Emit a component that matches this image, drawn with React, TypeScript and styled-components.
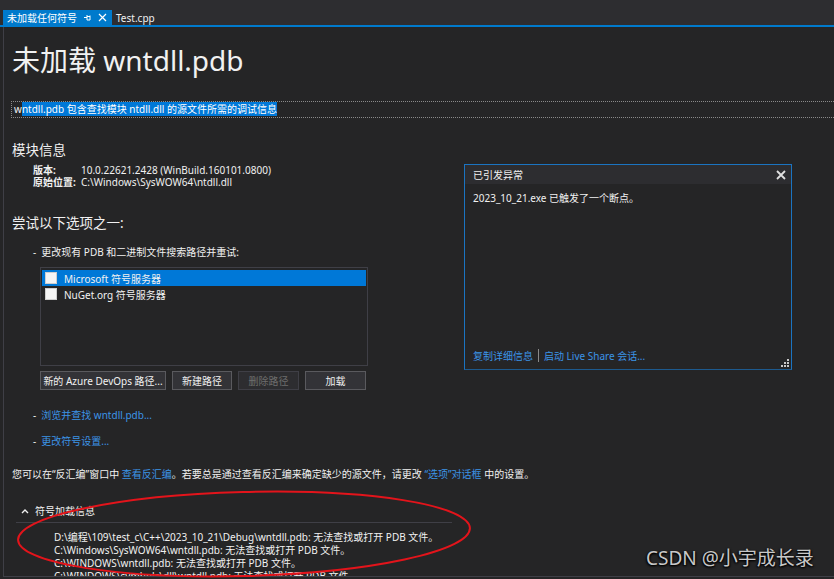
import styled, { createGlobalStyle } from "styled-components";

const GlobalStyle = createGlobalStyle`
    html, body {
        margin: 0;
        padding: 0;
        background: #252526;
    }
    body {
        font-family: "Segoe UI", "Noto Sans", "Noto Sans CJK SC", sans-serif;
        color: #f1f1f1;
    }
`;

const Window = styled.div`
    position: relative;
    width: 834px;
    height: 579px;
    overflow: hidden;
    background: #252526;
    display: flex;
    flex-direction: column;
`;

const TabBar = styled.div`
    height: 25px;
    background: #2d2d30;
    border-bottom: 2px solid #007acc;
    display: flex;
    align-items: flex-end;
    padding-left: 3px;
`;

const Tab = styled.div<{ $active?: boolean }>`
    height: 15px;
    display: flex;
    align-items: center;
    gap: 6px;
    padding: 0 5px 0 4px;
    font-size: 10px;
    background: ${(p) => (p.$active ? "#007acc" : "transparent")};
    color: ${(p) => (p.$active ? "#ffffff" : "#f1f1f1")};
`;

const TabIcon = styled.span`
    display: flex;
    align-items: center;
`;

const Content = styled.div`
    flex: 1;
    margin-left: 3px;
    margin-bottom: 2px;
    border-left: 1px solid #3f3f46;
    border-bottom: 1px solid #3f3f46;
    padding: 13px 0 0 8px;
    overflow: hidden;
`;

const Title = styled.h1`
    margin: 0;
    font-size: 28px;
    line-height: 40px;
    font-weight: 400;
    color: #f1f1f1;
`;

const Description = styled.div`
    margin: 21px 0 0 -1px;
    border: 1px dotted #8a8a8a;
    border-right: none;
    height: 15px;
    line-height: 15px;
    font-size: 10px;
    padding-left: 2px;
    white-space: nowrap;
`;

const Selected = styled.span`
    background: #0078d7;
    color: #ffffff;
`;

const Heading = styled.h2<{ $top: number }>`
    margin: ${(p) => p.$top}px 0 0 0;
    font-size: 13.5px;
    line-height: 20px;
    font-weight: 400;
    color: #f1f1f1;
`;

const InfoGrid = styled.div`
    margin: 4px 0 0 21px;
    display: grid;
    grid-template-columns: 48px auto;
    font-size: 10px;
    line-height: 12px;
`;

const InfoLabel = styled.span`
    font-weight: 700;
`;

const Option = styled.div<{ $top: number }>`
    margin: ${(p) => p.$top}px 0 0 21px;
    font-size: 10px;
    line-height: 14px;
    display: flex;
    gap: 5px;
`;

const Dash = styled.span`
    color: #f1f1f1;
`;

const Link = styled.span`
    color: #3c94e6;
`;

const Block = styled.div`
    margin: 8px 0 0 28px;
    width: 328px;
`;

const ListBox = styled.div`
    height: 93px;
    border: 1px solid #3f3f46;
    padding: 2px 1px;
    display: flex;
    flex-direction: column;
`;

const ListItem = styled.div<{ $selected?: boolean }>`
    height: 16px;
    display: flex;
    align-items: center;
    gap: 7px;
    padding-left: 3px;
    font-size: 10px;
    background: ${(p) => (p.$selected ? "#0078d7" : "transparent")};
`;

const Check = styled.span`
    width: 10px;
    height: 10px;
    background: #f5f5f5;
    border: 1px solid #cfcfcf;
`;

const ButtonRow = styled.div`
    margin-top: 5px;
    display: flex;
    gap: 6px;
`;

const Button = styled.div<{ $width: number; $disabled?: boolean }>`
    width: ${(p) => p.$width}px;
    height: 17px;
    box-sizing: content-box;
    border: 1px solid ${(p) => (p.$disabled ? "#3f3f46" : "#5a5a5e")};
    background: ${(p) => (p.$disabled ? "#2d2d30" : "#333337")};
    color: ${(p) => (p.$disabled ? "#6d6d6d" : "#f1f1f1")};
    font-size: 10px;
    display: flex;
    align-items: center;
    justify-content: center;
    white-space: nowrap;
`;

const Paragraph = styled.div`
    margin-top: 19px;
    font-size: 10px;
    line-height: 14px;
    white-space: nowrap;
`;

const Expander = styled.div`
    margin: 23px 0 0 4px;
    width: 431px;
    border-bottom: 1px solid #3f3f46;
    height: 18px;
    display: flex;
    align-items: flex-start;
    gap: 6px;
    padding-left: 5px;
    font-size: 10px;
    line-height: 14px;
`;

const Caret = styled.span`
    display: flex;
    align-items: center;
    height: 14px;
`;

const Log = styled.div`
    margin: 8px 0 0 42px;
    font-size: 10px;
    line-height: 13px;
    white-space: nowrap;
`;

/* floating exception helper */
const Popup = styled.div`
    position: absolute;
    left: 464px;
    top: 164px;
    width: 326px;
    height: 204px;
    border: 1px solid #1b74c1;
    border-bottom-color: #1d5a8e;
    background: #252526;
    display: flex;
    flex-direction: column;
`;

const PopupHeader = styled.div`
    height: 19px;
    background: #2d2d30;
    display: flex;
    align-items: center;
    justify-content: space-between;
    padding: 0 5px 0 8px;
    font-size: 10px;
`;

const PopupBody = styled.div`
    flex: 1;
    padding: 7px 8px 0 8px;
    font-size: 10px;
    line-height: 14px;
`;

const PopupFooter = styled.div`
    position: relative;
    height: 27px;
    display: flex;
    align-items: center;
    gap: 5px;
    padding-left: 8px;
    font-size: 10px;
`;

const Separator = styled.span`
    width: 1px;
    height: 13px;
    background: #8a8a8a;
`;

const Grip = styled.svg`
    position: absolute;
    right: 2px;
    bottom: 2px;
`;

const Annotation = styled.svg`
    position: absolute;
    left: 0;
    top: 0;
    pointer-events: none;
`;

const Watermark = styled.div`
    position: absolute;
    left: 646px;
    top: 545px;
    font-family: "Noto Sans", "Noto Sans CJK SC", sans-serif;
    font-size: 19px;
    line-height: 26px;
    color: #c8c8c8;
    text-shadow: 1px 1px 2px #000, -1px 1px 2px #000;
`;

const App = () => {
    return (
        <Window>
            <GlobalStyle />
            <TabBar>
                <Tab $active>
                    未加载任何符号
                    <TabIcon>
                        <svg width="9" height="9" viewBox="0 0 9 9">
                            <path d="M1 4.5h3M4 2v5h3V2.5M4 3.5h3" stroke="#fff" strokeWidth="1" fill="none" />
                        </svg>
                    </TabIcon>
                    <TabIcon>
                        <svg width="9" height="9" viewBox="0 0 9 9">
                            <path d="M1 1l7 7M8 1l-7 7" stroke="#fff" strokeWidth="1.2" />
                        </svg>
                    </TabIcon>
                </Tab>
                <Tab>Test.cpp</Tab>
            </TabBar>
            <Content>
                <Title>未加载 wntdll.pdb</Title>
                <Description>
                    w<Selected>ntdll.pdb 包含查找模块 ntdll.dll 的源文件所需的调试信息</Selected>
                </Description>
                <Heading $top={22}>模块信息</Heading>
                <InfoGrid>
                    <InfoLabel>版本:</InfoLabel>
                    <span>10.0.22621.2428 (WinBuild.160101.0800)</span>
                    <InfoLabel>原始位置:</InfoLabel>
                    <span>C:\Windows\SysWOW64\ntdll.dll</span>
                </InfoGrid>
                <Heading $top={25}>尝试以下选项之一:</Heading>
                <Option $top={12}>
                    <Dash>-</Dash>
                    <span>更改现有 PDB 和二进制文件搜索路径并重试:</span>
                </Option>
                <Block>
                    <ListBox>
                        <ListItem $selected>
                            <Check />
                            Microsoft 符号服务器
                        </ListItem>
                        <ListItem>
                            <Check />
                            NuGet.org 符号服务器
                        </ListItem>
                    </ListBox>
                    <ButtonRow>
                        <Button $width={124}>新的 Azure DevOps 路径...</Button>
                        <Button $width={58}>新建路径</Button>
                        <Button $width={59} $disabled>
                            删除路径
                        </Button>
                        <Button $width={59}>加载</Button>
                    </ButtonRow>
                </Block>
                <Option $top={18}>
                    <Dash>-</Dash>
                    <Link>浏览并查找 wntdll.pdb...</Link>
                </Option>
                <Option $top={12}>
                    <Dash>-</Dash>
                    <Link>更改符号设置...</Link>
                </Option>
                <Paragraph>
                    您可以在“反汇编”窗口中 <Link>查看反汇编</Link>。若要总是通过查看反汇编来确定缺少的源文件，请更改 <Link>“选项”对话框</Link> 中的设置。
                </Paragraph>
                <Expander>
                    <Caret>
                        <svg width="8" height="6" viewBox="0 0 8 6">
                            <path d="M1 5l3-3 3 3" stroke="#f1f1f1" strokeWidth="1.4" fill="none" />
                        </svg>
                    </Caret>
                    符号加载信息
                </Expander>
                <Log>
                    <div>D:\编程\109\test_c\C++\2023_10_21\Debug\wntdll.pdb: 无法查找或打开 PDB 文件。</div>
                    <div>C:\Windows\SysWOW64\wntdll.pdb: 无法查找或打开 PDB 文件。</div>
                    <div>C:\WINDOWS\wntdll.pdb: 无法查找或打开 PDB 文件。</div>
                    <div>C:\WINDOWS\symbols\dll\wntdll.pdb: 无法查找或打开 PDB 文件。</div>
                </Log>
            </Content>

            <Popup>
                <PopupHeader>
                    <span>已引发异常</span>
                    <svg width="10" height="10" viewBox="0 0 10 10">
                        <path d="M1 1l8 8M9 1l-8 8" stroke="#e0e0e0" strokeWidth="1.8" />
                    </svg>
                </PopupHeader>
                <PopupBody>2023_10_21.exe 已触发了一个断点。</PopupBody>
                <PopupFooter>
                    <Link>复制详细信息</Link>
                    <Separator />
                    <Link>启动 Live Share 会话...</Link>
                    <Grip width="8" height="8" viewBox="0 0 8 8">
                        <g fill="#c8c8c8">
                            <rect x="6" y="0" width="2" height="2" />
                            <rect x="6" y="3" width="2" height="2" />
                            <rect x="3" y="3" width="2" height="2" />
                            <rect x="6" y="6" width="2" height="2" />
                            <rect x="3" y="6" width="2" height="2" />
                            <rect x="0" y="6" width="2" height="2" />
                        </g>
                    </Grip>
                </PopupFooter>
            </Popup>

            <Annotation width="834" height="579" viewBox="0 0 834 579">
                <ellipse cx="244" cy="534" rx="226" ry="42" transform="rotate(-1.5 244 534)" fill="none" stroke="#e3141b" strokeWidth="2" />
            </Annotation>

            <Watermark>CSDN @小宇成长录</Watermark>
        </Window>
    );
};

export default App;
